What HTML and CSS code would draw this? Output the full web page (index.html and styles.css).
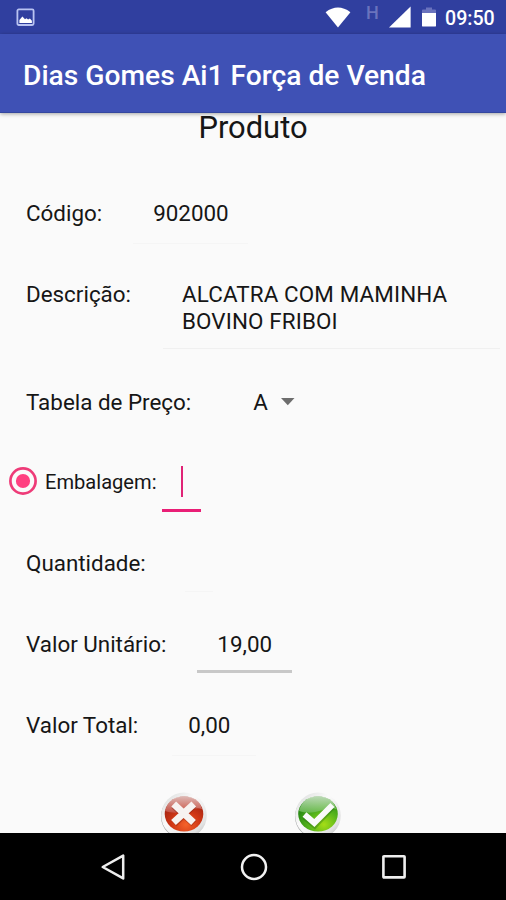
FILE: index.html
```html
<!DOCTYPE html>
<html lang="pt-BR">
<head>
<meta charset="utf-8">
<title>Dias Gomes Ai1 Força de Venda</title>
<link rel="stylesheet" href="styles.css">
</head>
<body>
<div class="screen">
  <header class="status">
    <svg class="ic-photo" width="20" height="20" viewBox="0 0 20 20"><rect x="1.4" y="1.4" width="16.2" height="15.6" rx="1.4" fill="none" stroke="#b9c3f2" stroke-width="1.8"/><path d="M3.4 15v-3l3-3.4 2.6 2.6 1.5-1 1.6 1.4 1.8-1.2 2 2.4V15z" fill="#fff"/></svg>
    <svg class="ic-wifi" width="26" height="21" viewBox="0 0 26 21"><path d="M.6 5.2Q12.9-4 25.4 5.2L13 20.4z" fill="#fff"/></svg>
    <span class="net">H</span>
    <svg class="ic-signal" width="22" height="22" viewBox="0 0 22 22"><path d="M0 21.5L21.6.5v21z" fill="#fff"/></svg>
    <svg class="ic-battery" width="14" height="20" viewBox="0 0 14 20"><path d="M0 6V3.4Q0 2.4 1 2.4h3V.4h6v2h3q1 0 1 1V6z" fill="#6a73bd"/><path d="M0 6h14v12.4q0 1.2-1 1.2H1q-1 0-1-1.2z" fill="#fff"/></svg>
    <span class="clock">09:50</span>
  </header>
  <div class="toolbar"><h1>Dias Gomes Ai1 Força de Venda</h1></div>
  <main class="content">
    <h2>Produto</h2>
    <div class="row"><label>Código:</label><span class="field codigo">902000</span></div>
    <div class="row tall"><label>Descrição:</label><span class="field descricao">ALCATRA COM MAMINHA<br>BOVINO FRIBOI</span></div>
    <div class="row"><label>Tabela de Preço:</label><span class="select">A<svg width="14" height="8" viewBox="0 0 14 8"><path d="M0 0h13.5L6.8 7.2z" fill="#6d6d6d"/></svg></span></div>
    <div class="row radio-row">
      <svg class="radio" width="30" height="30" viewBox="0 0 30 30"><circle cx="15" cy="15" r="12.6" fill="none" stroke="#ee3b78" stroke-width="2.7"/><circle cx="15" cy="15" r="7.1" fill="#ff4081"/></svg>
      <label class="small">Embalagem:</label><span class="field embalagem"><i class="caret"></i></span>
    </div>
    <div class="row"><label>Quantidade:</label><span class="field quantidade"></span></div>
    <div class="row"><label>Valor Unitário:</label><span class="field unitario">19,00</span></div>
    <div class="row"><label>Valor Total:</label><span class="field total">0,00</span></div>
    <div class="actions">
      <svg width="48" height="48" viewBox="0 0 48 48">
        <defs>
          <linearGradient id="rim" x1="0" y1="0" x2="1" y2="1"><stop offset="0" stop-color="#d8dad9"/><stop offset=".4" stop-color="#fbfbfb"/><stop offset=".8" stop-color="#e2e2e2"/><stop offset="1" stop-color="#aaa"/></linearGradient>
          <radialGradient id="red" cx=".55" cy=".8" r=".75"><stop offset="0" stop-color="#f5632a"/><stop offset=".5" stop-color="#cf3716"/><stop offset="1" stop-color="#9c2012"/></radialGradient>
          <linearGradient id="redGloss" x1="0" y1="0" x2="0" y2="1"><stop offset="0" stop-color="#efe0de"/><stop offset="1" stop-color="#c9584d"/></linearGradient>
        </defs>
        <circle cx="23.2" cy="24.4" r="22.2" fill="#a5a7a8"/><circle cx="24" cy="23.4" r="22.8" fill="url(#rim)"/>
        <ellipse cx="24" cy="22" rx="19.3" ry="17.6" fill="url(#red)"/>
        <path d="M5 19C8 8 15 4.2 24 4.2S40 8 42 17C32 13 22 25 5 19z" fill="url(#redGloss)" opacity=".8"/>
        <path d="M14 13.5L34 31.5M34 12.9L14 31.5" stroke="#6f1b10" stroke-opacity=".35" stroke-width="7.4"/>
        <path d="M13.7 12L33.5 30.5M33.8 12L13.5 30.5" stroke="#f7f3f1" stroke-width="7"/>
      </svg>
      <svg width="48" height="48" viewBox="0 0 48 48">
        <defs>
          <radialGradient id="green" cx=".65" cy=".8" r=".75"><stop offset="0" stop-color="#a5dd16"/><stop offset=".5" stop-color="#57b51b"/><stop offset="1" stop-color="#238612"/></radialGradient>
          <linearGradient id="greenGloss" x1="0" y1="0" x2="0" y2="1"><stop offset="0" stop-color="#e3efdf"/><stop offset="1" stop-color="#6fbd58"/></linearGradient>
        </defs>
        <circle cx="23.2" cy="24.4" r="22.2" fill="#a5a7a8"/><circle cx="24" cy="23.4" r="22.8" fill="url(#rim)"/>
        <ellipse cx="24" cy="22" rx="19.8" ry="17.6" fill="url(#green)"/>
        <path d="M5 19C8 8 15 4.2 24 4.2S40 8 42 17C32 13 22 25 5 19z" fill="url(#greenGloss)" opacity=".8"/>
        <path d="M10.5 24.5L20.7 33 38.5 14.5" fill="none" stroke="#1d6410" stroke-opacity=".35" stroke-width="6.5"/>
        <path d="M10.5 22.5L20.3 31 38.4 13" fill="none" stroke="#fafafa" stroke-width="5.8"/>
      </svg>
    </div>
  </main>
  <nav class="navbar">
    <svg width="28" height="30" viewBox="0 0 28 30"><path d="M2.7 15L23.2 3.6V26.4z" fill="none" stroke="#eee" stroke-width="2.5" stroke-linejoin="round"/></svg>
    <svg class="home" width="30" height="30" viewBox="0 0 30 30"><circle cx="15" cy="15" r="12" fill="none" stroke="#f2f2f2" stroke-width="2.5"/></svg>
    <svg width="26" height="30" viewBox="0 0 26 30"><rect x="1.4" y="4.2" width="21.2" height="21.2" rx=".6" fill="none" stroke="#eee" stroke-width="2.6"/></svg>
  </nav>
</div>
</body>
</html>
```

FILE: styles.css
```css
* { box-sizing: border-box; }
body { margin: 0; font-family: Roboto, "Liberation Sans", sans-serif; color: #161616; }
svg { display: block; flex: none; }
.screen { width: 506px; height: 900px; display: flex; flex-direction: column; overflow: hidden; background: #fafafa; }
.status { height: 34px; flex: none; display: flex; align-items: flex-start; background: #303f9f; color: #fff; }
.ic-photo { margin: 8px 0 0 16px; }
.ic-wifi { margin: 7px 0 0 289px; }
.net { margin: 4px 0 0 15px; width: 13px; font-size: 18px; line-height: 18px; font-weight: 500; color: #6a73bd; }
.ic-signal { margin: 6px 0 0 10px; }
.ic-battery { margin: 7px 0 0 11px; }
.clock { margin: 7px 0 0 9px; font-size: 19.6px; line-height: 24px; font-weight: 500; }
.toolbar { height: 79px; flex: none; padding: 26px 0 0 23px; background: #3f51b5; border-bottom: 1px solid #34479f; box-shadow: 0 1px 4px rgba(0, 0, 0, .35); }
h1 { margin: 0; font-size: 28.2px; line-height: 32px; font-weight: 500; color: #fff; white-space: nowrap; }
.content { height: 720px; flex: none; }
h2 { margin: -3px 0 27px; font-size: 30.9px; line-height: 36px; font-weight: 400; text-align: center; }
.row { height: 80.8px; padding: 27px 0 0 26px; display: flex; align-items: flex-start; font-size: 22.4px; line-height: 27px; white-space: nowrap; }
.tall { height: 107.8px; }
.field { height: 44px; border-bottom: 1px solid #f5f5f5; }
.codigo { width: 115px; margin-left: 31px; padding-left: 20px; }
.descricao { width: 337px; height: 68px; margin-left: 32px; padding-left: 19px; border-color: #f0f0f0; letter-spacing: .13px; }
.select { margin-left: 62px; display: flex; align-items: center; gap: 13px; }
.radio-row { padding-left: 8px; }
.radio { margin-top: -3px; }
.small { margin: 1px 0 0 7px; font-size: 20.1px; line-height: 25px; }
.embalagem { width: 39px; height: 43px; margin-left: 5px; border-bottom: 3px solid #e91e76; }
.caret { display: block; width: 2px; height: 31px; margin: -3px 0 0 19px; background: #e02376; }
.quantidade { width: 28px; margin-left: 39px; height: 42px; }
.unitario { width: 95px; height: 42px; margin-left: 31px; padding-left: 20px; border-bottom: 3px solid #c8c8c8; }
.total { width: 84px; margin-left: 34px; padding-left: 16px; }
.actions { display: flex; gap: 86px; padding: 26.5px 0 0 159.5px; }
.navbar { flex: 1; display: flex; justify-content: space-between; padding: 19px 98px 0 100px; background: #000; position: relative; }
.home { margin-left: -2px; }
```
